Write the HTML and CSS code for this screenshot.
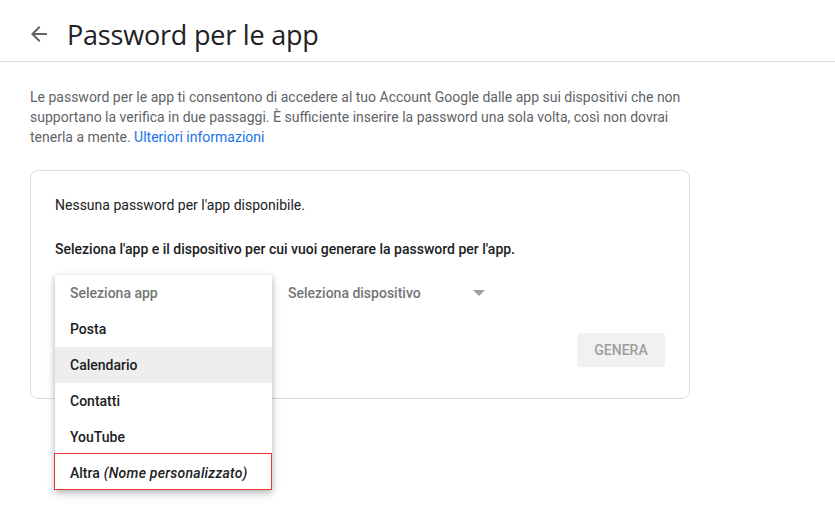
FILE: index.html
```html
<!DOCTYPE html>
<html lang="it">
<head>
<meta charset="utf-8">
<title>Password per le app</title>
<link rel="stylesheet" href="styles.css">
</head>
<body>
<header class="header">
  <a class="back" href="#" aria-label="Indietro">
    <svg width="24" height="24" viewBox="0 0 24 24"><path d="M20 11H7.83l5.59-5.59L12 4l-8 8 8 8 1.41-1.41L7.83 13H20v-2z" fill="#5f6368"/></svg>
  </a>
  <h1 class="title">Password per le app</h1>
</header>
<main class="main">
  <p class="intro">Le password per le app ti consentono di accedere al tuo Account Google dalle app sui dispositivi che non supportano la verifica in due passaggi. È sufficiente inserire la password una sola volta, così non dovrai tenerla a mente. <a class="link" href="#">Ulteriori informazioni</a></p>
  <section class="card">
    <p class="empty">Nessuna password per l'app disponibile.</p>
    <p class="instr">Seleziona l'app e il dispositivo per cui vuoi generare la password per l'app.</p>
    <div class="selects">
      <div class="select select-app">
        <span class="placeholder">Seleziona app</span>
        <ul class="menu">
          <li class="item item-head">Seleziona app</li>
          <li class="item">Posta</li>
          <li class="item item-hover">Calendario</li>
          <li class="item">Contatti</li>
          <li class="item">YouTube</li>
          <li class="item item-focus">Altra <em>(Nome personalizzato)</em></li>
        </ul>
      </div>
      <div class="select select-device">
        <span class="placeholder">Seleziona dispositivo</span>
        <span class="caret"></span>
      </div>
    </div>
    <div class="actions">
      <button class="btn" type="button" disabled>GENERA</button>
    </div>
  </section>
</main>
</body>
</html>
```
FILE: styles.css
```css
* { box-sizing: border-box; }
html, body { margin: 0; padding: 0; background: #fff; }
body {
  font-family: Roboto, "Liberation Sans", Arial, sans-serif;
  color: #202124;
  font-size: 14px;
  min-height: 515px;
}
.header {
  height: 62px;
  border-bottom: 1px solid #dadce0;
  display: flex;
  align-items: center;
  padding: 8px 0 0 27px;
}
.back { display: flex; width: 24px; height: 24px; margin-top: -1px; }
.title {
  margin: 0 0 0 16px;
  font-family: "Open Sans", Roboto, sans-serif;
  font-weight: 400;
  font-size: 27px;
  color: #202124;
  letter-spacing: -0.2px;
}
.main { padding: 0 30px; }
.intro {
  margin: 25px 0 0;
  max-width: 660px;
  line-height: 20px;
  color: #5f6368;
}
.link { color: #1a73e8; text-decoration: none; }
.card {
  margin-top: 23px;
  width: 660px;
  border: 1px solid #dadce0;
  border-radius: 8px;
  padding: 24px 24px 31px;
}
.empty { margin: 0; line-height: 20px; color: #202124; }
.instr { margin: 24px 0 0; line-height: 20px; font-weight: 500; color: #202124; }
.selects {
  margin-top: 16px;
  display: flex;
  gap: 15px;
  height: 36px;
}
.select {
  position: relative;
  display: flex;
  align-items: center;
  height: 36px;
}
.select-app { width: 218px; padding-left: 16px; }
.select-device { width: 197px; }
.placeholder { color: #757575; font-weight: 500; }
.caret {
  margin-left: auto;
  width: 0; height: 0;
  border-left: 6px solid transparent;
  border-right: 6px solid transparent;
  border-top: 6px solid #9e9e9e;
}
.menu {
  position: absolute;
  left: 0;
  top: 0;
  width: 217px;
  margin: 0;
  padding: 0;
  list-style: none;
  background: #fff;
  box-shadow: 0 2px 6px rgba(0,0,0,.22), 0 4px 10px rgba(0,0,0,.12);
  z-index: 2;
}
.item {
  height: 36px;
  display: flex;
  align-items: center;
  padding-left: 15px;
  font-weight: 500;
  color: #202124;
  white-space: nowrap;
}
.item em { margin-left: 4px; font-style: italic; letter-spacing: 0.25px; }
.item-head { color: #757575; }
.item-hover { background: #eeeeee; }
.item-focus {
  border: 1px solid #e53935;
  margin: -2px 0 0 -1px;
  height: 37px;
  width: 218px;
  padding: 3px 0 0 15px;
  position: relative;
  background: #fff;
}
.actions {
  margin-top: 22px;
  display: flex;
  justify-content: flex-end;
}
.btn {
  height: 34px;
  width: 88px;
  border: 0;
  border-radius: 4px;
  background: #f1f1f1;
  color: #9e9e9e;
  font-family: Roboto, sans-serif;
  font-weight: 500;
  font-size: 14px;
}
```
